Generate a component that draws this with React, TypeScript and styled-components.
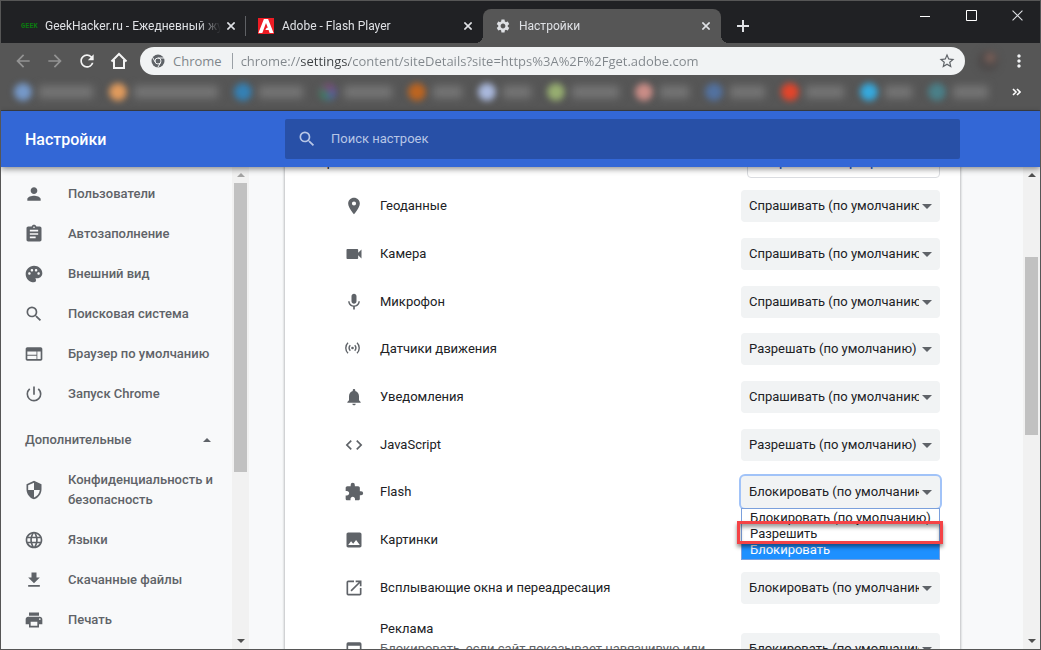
import React from 'react';
import styled, { createGlobalStyle, css } from 'styled-components';
import {
  MdPerson, MdAssignment, MdPalette, MdSearch, MdWeb, MdPowerSettingsNew, MdSecurity, MdLanguage,
  MdFileDownload, MdPrint, MdLocationOn, MdVideocam, MdMic, MdNotifications, MdCode, MdExtension,
  MdImage, MdOpenInNew, MdSettings, MdArrowBack, MdArrowForward, MdRefresh, MdStarBorder, MdMoreVert,
  MdWebAsset,
} from 'react-icons/md';

const chromeFont = "'Open Sans', 'Noto Sans', sans-serif";
const pageFont = "Roboto, 'Noto Sans', sans-serif";

const GlobalStyle = createGlobalStyle`
  * { box-sizing: border-box; }
  body { margin: 0; background: #565656; }
  button, input, select { font: inherit; color: inherit; }
`;

const Window = styled.div`
  display: flex;
  flex-direction: column;
  height: 100vh;
  border: 1px solid #565656;
  overflow: hidden;
  font: 13px/20px ${pageFont};
`;

/* ---------- title bar ---------- */

const TitleBar = styled.div`
  display: flex;
  flex: none;
  height: 42px;
  padding-left: 8px;
  background: #202124;
  color: #dfe1e5;
  font: 12px/18px ${pageFont};
`;

const TabStrip = styled.div`
  display: flex;
  flex: 1;
  min-width: 0;
  padding-top: 8px;
`;

const TabBox = styled.div<{ $active?: boolean; $line?: boolean }>`
  position: relative;
  display: flex;
  align-items: center;
  gap: 8px;
  flex: 0 1 ${p => (p.$active ? 238 : 237)}px;
  min-width: 0;
  padding: 0 7px 0 12px;
  ${p => p.$line && css`
    &::after {
      content: '';
      position: absolute;
      right: 0;
      top: 7px;
      width: 1px;
      height: 20px;
      background: #5f6165;
    }
  `}
  ${p => p.$active && css`
    background: #565656;
    border-radius: 8px 8px 0 0;
    &::before, &::after {
      content: '';
      position: absolute;
      bottom: 0;
      width: 8px;
      height: 8px;
    }
    &::before {
      left: -8px;
      background: radial-gradient(circle at 0 0, transparent 8px, #565656 8px);
    }
    &::after {
      right: -8px;
      background: radial-gradient(circle at 100% 0, transparent 8px, #565656 8px);
    }
  `}
`;

const TabTitle = styled.span`
  flex: 1;
  min-width: 0;
  margin-right: -6px;
  overflow: hidden;
  white-space: nowrap;
  mask-image: linear-gradient(to right, #000 calc(100% - 24px), transparent);
`;

const PlainButton = styled.button`
  display: flex;
  align-items: center;
  justify-content: center;
  flex: none;
  padding: 0;
  border: 0;
  background: none;
  color: inherit;
`;

const TabClose = styled(PlainButton)`
  width: 16px;
  height: 16px;
`;

const NewTab = styled(PlainButton)`
  width: 28px;
  height: 34px;
  margin-left: 8px;
`;

const CaptionButton = styled(PlainButton)`
  width: 46px;
  height: 29px;
`;

const GeekIcon = styled.span`
  width: 16px;
  color: #0b7a0f;
  font: bold 7px/16px 'Liberation Mono', monospace;
`;

/* ---------- toolbar ---------- */

const Toolbar = styled.div`
  display: flex;
  align-items: center;
  flex: none;
  height: 35px;
  padding: 0 10px 0 6px;
  background: #565656;
  color: #f1f3f4;
`;

const ToolButton = styled(PlainButton)<{ $dim?: boolean }>`
  width: 32px;
  height: 28px;
  color: ${p => (p.$dim ? '#939393' : '#f4f4f4')};
`;

const Omnibox = styled.div`
  display: flex;
  align-items: center;
  flex: 1;
  min-width: 0;
  height: 28px;
  margin-left: 5px;
  padding: 0 9px 0 11px;
  border-radius: 14px;
  background: #f1f3f4;
  color: #80868b;
  font: 13px/20px ${chromeFont};
`;

const SiteChip = styled.span`
  margin: 0 10px 0 8px;
`;

const ChipLine = styled.span`
  width: 1px;
  height: 16px;
  margin-right: 8px;
  background: #9aa0a6;
`;

const UrlInput = styled.input`
  flex: 1;
  min-width: 0;
  padding: 0;
  border: 0;
  outline: 0;
  background: linear-gradient(to right, #80868b 60px, #3c4043 60px, #3c4043 108px, #80868b 108px);
  background-clip: text;
  -webkit-background-clip: text;
  -webkit-text-fill-color: transparent;
`;

const Avatar = styled.span`
  width: 22px;
  height: 22px;
  margin: 0 9px 0 12px;
  border-radius: 50%;
  background: radial-gradient(circle at 60% 35%, #7c6058 10%, #4e4a4a 40%, #4c4c4c);
  filter: blur(3px);
`;

const MenuButton = styled(PlainButton)`
  width: 22px;
`;

/* ---------- bookmarks ---------- */

const BookmarkBar = styled.div`
  display: flex;
  align-items: center;
  flex: none;
  height: 33px;
  padding: 0 19px 4px 13px;
  border-bottom: 1px solid #3c3f45;
  background: #565656;
  color: #fff;
`;

const Bookmark = styled(PlainButton)<{ $width: number }>`
  flex: 0 1 ${p => p.$width}px;
  justify-content: flex-start;
  gap: 7px;
  padding-right: 16px;
`;

const BookmarkDot = styled.span<{ $color: string }>`
  flex: none;
  width: 18px;
  height: 18px;
  border-radius: 50%;
  background: ${p => p.$color};
  filter: blur(3px);
`;

const BookmarkSmear = styled.span`
  flex: 1;
  height: 12px;
  background: #767676;
  filter: blur(4px);
`;

const More = styled(PlainButton)`
  margin-left: auto;
`;

/* ---------- settings page ---------- */

const Header = styled.header`
  position: relative;
  z-index: 2;
  display: flex;
  align-items: center;
  flex: none;
  height: 56px;
  padding: 0 80px 0 24px;
  background: #3367d6;
  box-shadow: 0 2px 6px rgba(0, 0, 0, 0.45);
  color: #fff;
`;

const PageTitle = styled.h1`
  flex: 0 0 260px;
  margin: 0;
  padding-top: 2px;
  font: 500 16px/24px ${pageFont};
`;

const SearchField = styled.label`
  display: flex;
  align-items: center;
  gap: 14px;
  flex: 1;
  min-width: 0;
  height: 40px;
  padding: 0 12px;
  border-radius: 2px;
  background: #2850a7;
  color: #b7c6e6;
`;

const SearchInput = styled.input`
  flex: 1;
  min-width: 0;
  padding: 0;
  border: 0;
  outline: 0;
  background: none;
  &::placeholder { color: #b7c6e6; opacity: 1; }
`;

const Body = styled.div`
  display: flex;
  flex: 1;
  min-height: 0;
  background: #f8f9fa;
`;

const Sidebar = styled.nav`
  flex: 0 0 231px;
  padding-top: 7px;
  overflow: hidden;
  color: #5f6368;
  font-weight: 500;
`;

const NavLink = styled.a`
  display: flex;
  align-items: center;
  gap: 24px;
  min-height: 40px;
  padding: 0 16px 0 23px;
  color: inherit;
  text-decoration: none;
  svg { flex: none; }
`;

const NavLinkTall = styled(NavLink)`
  min-height: 60px;
`;

const NavGroup = styled(PlainButton)`
  justify-content: space-between;
  width: 100%;
  height: 40px;
  margin-top: 6px;
  padding: 0 21px 0 24px;
  font-weight: 500;
`;

const ScrollTrack = styled.div`
  display: flex;
  flex-direction: column;
  align-items: center;
  flex: 0 0 17px;
  background: #f1f1f1;
`;

const ScrollArrow = styled(PlainButton)<{ $dim?: boolean; $last?: boolean }>`
  width: 17px;
  height: 16px;
  margin-top: ${p => (p.$last ? 'auto' : '0')};
  color: ${p => (p.$dim ? '#a3a3a3' : '#505050')};
`;

const ScrollThumb = styled.div<{ $start: number; $size: number }>`
  flex: 0 0 ${p => p.$size}%;
  width: 13px;
  margin-top: ${p => p.$start}px;
  background: #c1c1c1;
`;

const Main = styled.main`
  flex: 1;
  min-width: 0;
  padding: 0 63px 0 36px;
  overflow: hidden;
`;

const Card = styled.section`
  margin-top: -22px;
  padding: 0 20px;
  background: #fff;
  box-shadow: 0 0 2px 1px rgba(60, 64, 67, 0.3);
  color: #202124;
`;

const CardHead = styled.div`
  display: flex;
  align-items: center;
  justify-content: space-between;
  margin-bottom: 4px;
`;

const CardTitle = styled.h2`
  margin: 0;
  font: inherit;
`;

const ResetButton = styled.button`
  height: 33px;
  padding: 0 15px;
  border: 1px solid #dadce0;
  border-radius: 4px;
  background: #fff;
  color: #3367d6;
  font-weight: 500;
`;

const PermissionRow = styled.div<{ $tall?: boolean }>`
  display: flex;
  align-items: center;
  height: ${p => (p.$tall ? '76px' : '48px')};
  margin-left: 39px;
  &:nth-child(3n) { height: 47px; }
`;

const RowIcon = styled.span`
  display: flex;
  flex: 0 0 36px;
  color: #5f6368;
`;

const RowLabel = styled.label`
  flex: 1;
  min-width: 0;
  padding-right: 24px;
`;

const RowNote = styled.span`
  display: block;
  color: #5f6368;
`;

const SelectBox = styled.div`
  position: relative;
  flex: 0 0 199px;
  color: #5f6368;
  > svg {
    position: absolute;
    right: 8px;
    top: 14px;
    pointer-events: none;
  }
`;

const Select = styled.select<{ $open?: boolean }>`
  display: block;
  width: 100%;
  height: 32px;
  padding: 0 21px 0 8px;
  border: 0;
  border-radius: 4px;
  outline: 0;
  appearance: none;
  background: #f1f3f4;
  color: #202124;
  box-shadow: ${p => (p.$open ? '0 0 0 2px #a1c3f8' : 'none')};
`;

const OptionList = styled.ul`
  position: absolute;
  z-index: 1;
  left: 0;
  right: 0;
  top: 32px;
  margin: 0;
  padding: 0;
  border: 1px solid #7ba0dc;
  background: #fff;
  list-style: none;
  line-height: 18px;
`;

const Option = styled.li<{ $on?: boolean }>`
  height: ${p => (p.$on ? '18px' : '16px')};
  padding-left: 8px;
  white-space: nowrap;
  background: ${p => (p.$on ? '#1e90ff' : 'transparent')};
  color: ${p => (p.$on ? '#fff' : '#202124')};
`;

const Highlight = styled.div`
  position: absolute;
  z-index: 2;
  left: -4px;
  right: -3px;
  top: 45px;
  height: 23px;
  border: 3px solid #f44346;
  box-shadow: 0 3px 4px rgba(0, 0, 0, 0.45), inset 0 3px 4px rgba(0, 0, 0, 0.4);
  pointer-events: none;
`;

/* ---------- drawings ---------- */

const Cross = ({ size = 8, width = 2 }: { size?: number; width?: number }) => (
  <svg width={size} height={size} viewBox="0 0 10 10" stroke="currentColor" strokeWidth={width} aria-hidden>
    <path d="M0.5 0.5l9 9M9.5 0.5l-9 9" />
  </svg>
);

const Triangle = ({ up, size = 10 }: { up?: boolean; size?: number }) => (
  <svg width={size} height={size / 2} viewBox="0 0 10 5" fill="currentColor" aria-hidden>
    <path d={up ? 'M0 5L5 0l5 5z' : 'M0 0l5 5 5-5z'} />
  </svg>
);

const AdobeIcon = () => (
  <svg width="16" height="16" viewBox="0 0 16 16" aria-hidden>
    <path fill="#ed1c24" d="M0 0h16v16H0z" />
    <path fill="#fff" d="M5.900 1h4.200L15.600 15h-4L10.600 12H7.300l1.400-2.300h1.100L8 5 4.300 15H.4z" />
  </svg>
);

const ChromeIcon = () => (
  <svg width="14" height="14" viewBox="0 0 14 14" aria-hidden>
    <circle cx="7" cy="7" r="6.500" fill="#5f6368" />
    <circle cx="7" cy="7" r="3" fill="#5f6368" stroke="#f1f3f4" strokeWidth="1" />
    <path d="M7 4h6M4.400 8.500L1.600 3.400M9.600 8.500L6.800 13.400" stroke="#f1f3f4" strokeWidth="1" />
  </svg>
);

const HomeIcon = () => (
  <svg width="18" height="18" viewBox="0 0 18 18" fill="none" stroke="currentColor" strokeWidth="2" aria-hidden>
    <path d="M1.500 9.500L9 2l7.500 7.500M4 8v8h10V8" />
  </svg>
);

const SensorIcon = () => (
  <svg width="20" height="20" viewBox="0 0 20 20" fill="none" stroke="#5f6368" strokeWidth="1.400" aria-hidden>
    <circle cx="8.500" cy="9" r="1.300" fill="#5f6368" stroke="none" />
    <path d="M6.300 6.300a4 4 0 0 0 0 5.400M10.700 6.300a4 4 0 0 1 0 5.400M4 3.800a7.200 7.200 0 0 0 0 10.400M13 3.800a7.200 7.200 0 0 1 0 10.400" />
  </svg>
);

/* ---------- data ---------- */

const bookmarks: [string, number][] = [
  ['#7598c8', 95], ['#e09a5c', 125], ['#3480b4', 85],
  ['conic-gradient(#7a4a70, #55609a, #3c8060, #7a4a70)', 89], ['#bc6420', 70], ['#a9b8dc', 69],
  ['#96ad70', 88], ['#c98c86', 70], ['#52719f', 76], ['#e2442a', 79], ['#35a8dc', 68], ['#4a7f88', 76],
];

const navTop = [
  { icon: MdPerson, text: 'Пользователи' },
  { icon: MdAssignment, text: 'Автозаполнение' },
  { icon: MdPalette, text: 'Внешний вид' },
  { icon: MdSearch, text: 'Поисковая система' },
  { icon: MdWeb, text: 'Браузер по умолчанию' },
  { icon: MdPowerSettingsNew, text: 'Запуск Chrome' },
];

const navMore = [
  { icon: MdLanguage, text: 'Языки' },
  { icon: MdFileDownload, text: 'Скачанные файлы' },
  { icon: MdPrint, text: 'Печать' },
];

const ask = 'Спрашивать (по умолчанию)';
const allow = 'Разрешать (по умолчанию)';
const block = 'Блокировать (по умолчанию)';

const permissions = [
  { id: 'geo', icon: <MdLocationOn size={20} />, text: 'Геоданные', value: ask },
  { id: 'camera', icon: <MdVideocam size={20} />, text: 'Камера', value: ask },
  { id: 'mic', icon: <MdMic size={20} />, text: 'Микрофон', value: ask },
  { id: 'sensors', icon: <SensorIcon />, text: 'Датчики движения', value: allow },
  { id: 'notify', icon: <MdNotifications size={20} />, text: 'Уведомления', value: ask },
  { id: 'js', icon: <MdCode size={20} />, text: 'JavaScript', value: allow },
  { id: 'flash', icon: <MdExtension size={20} />, text: 'Flash', value: block, open: true },
  { id: 'images', icon: <MdImage size={20} />, text: 'Картинки', value: block },
  { id: 'popups', icon: <MdOpenInNew size={20} />, text: 'Всплывающие окна и переадресация', value: block },
  {
    id: 'ads', icon: <MdWebAsset size={20} />, text: 'Реклама', value: block,
    note: 'Блокировать, если сайт показывает навязчивую или вводящую в заблуждение рекламу',
  },
];

export default function App() {
  return (
    <Window>
      <GlobalStyle />
      <TitleBar>
        <TabStrip>
          <TabBox $line>
            <GeekIcon>GEEK</GeekIcon>
            <TabTitle>GeekHacker.ru - Ежедневный жу</TabTitle>
            <TabClose aria-label="Закрыть вкладку"><Cross /></TabClose>
          </TabBox>
          <TabBox>
            <AdobeIcon />
            <TabTitle>Adobe - Flash Player</TabTitle>
            <TabClose aria-label="Закрыть вкладку"><Cross /></TabClose>
          </TabBox>
          <TabBox $active>
            <MdSettings size={16} />
            <TabTitle>Настройки</TabTitle>
            <TabClose aria-label="Закрыть вкладку"><Cross /></TabClose>
          </TabBox>
          <NewTab aria-label="Новая вкладка">
            <svg width="12" height="12" viewBox="0 0 12 12" stroke="currentColor" strokeWidth="2" aria-hidden>
              <path d="M6 0v12M0 6h12" />
            </svg>
          </NewTab>
        </TabStrip>
        <CaptionButton aria-label="Свернуть">
          <svg width="10" height="10" viewBox="0 0 10 10" stroke="#fff" aria-hidden><path d="M0 5.500h10" /></svg>
        </CaptionButton>
        <CaptionButton aria-label="Развернуть">
          <svg width="11" height="11" viewBox="0 0 11 11" fill="none" stroke="#fff" aria-hidden>
            <path d="M.5.5h10v10H.5z" />
          </svg>
        </CaptionButton>
        <CaptionButton aria-label="Закрыть"><Cross size={11} width={1} /></CaptionButton>
      </TitleBar>

      <Toolbar>
        <ToolButton $dim aria-label="Назад"><MdArrowBack size={20} /></ToolButton>
        <ToolButton $dim aria-label="Вперёд"><MdArrowForward size={20} /></ToolButton>
        <ToolButton aria-label="Обновить"><MdRefresh size={20} /></ToolButton>
        <ToolButton aria-label="Домой"><HomeIcon /></ToolButton>
        <Omnibox>
          <ChromeIcon />
          <SiteChip>Chrome</SiteChip>
          <ChipLine />
          <UrlInput
            aria-label="Адрес"
            defaultValue="chrome://settings/content/siteDetails?site=https%3A%2F%2Fget.adobe.com"
          />
          <MdStarBorder size={18} color="#5f6368" />
        </Omnibox>
        <Avatar />
        <MenuButton aria-label="Меню"><MdMoreVert size={20} /></MenuButton>
      </Toolbar>

      <BookmarkBar>
        {bookmarks.map(([color, width], i) => (
          <Bookmark key={i} $width={width} aria-label="Закладка">
            <BookmarkDot $color={color} />
            <BookmarkSmear />
          </Bookmark>
        ))}
        <More aria-label="Другие закладки">
          <svg width="9" height="8" viewBox="0 0 9 8" fill="none" stroke="#fff" strokeWidth="1.600" aria-hidden>
            <path d="M1 1l3 3-3 3M5 1l3 3-3 3" />
          </svg>
        </More>
      </BookmarkBar>

      <Header>
        <PageTitle>Настройки</PageTitle>
        <SearchField>
          <MdSearch size={20} />
          <SearchInput type="search" placeholder="Поиск настроек" aria-label="Поиск настроек" />
        </SearchField>
      </Header>

      <Body>
        <Sidebar>
          {navTop.map(({ icon: Icon, text }) => (
            <NavLink key={text} href="#"><Icon size={20} />{text}</NavLink>
          ))}
          <NavGroup>Дополнительные<Triangle up size={8} /></NavGroup>
          <NavLinkTall href="#"><MdSecurity size={20} />Конфиденциальность и безопасность</NavLinkTall>
          {navMore.map(({ icon: Icon, text }) => (
            <NavLink key={text} href="#"><Icon size={20} />{text}</NavLink>
          ))}
        </Sidebar>
        <ScrollTrack>
          <ScrollArrow $dim aria-label="Вверх"><Triangle up size={8} /></ScrollArrow>
          <ScrollThumb $start={0} $size={60} />
          <ScrollArrow $last aria-label="Вниз"><Triangle size={8} /></ScrollArrow>
        </ScrollTrack>

        <Main>
          <Card>
            <CardHead>
              <CardTitle>Разрешения</CardTitle>
              <ResetButton>Сбросить все разрешения</ResetButton>
            </CardHead>
            <div>
              {permissions.map(({ id, icon, text, value, open, note }) => (
                <PermissionRow key={id} $tall={!!note}>
                  <RowIcon>{icon}</RowIcon>
                  <RowLabel htmlFor={id}>
                    {text}
                    {note && <RowNote>{note}</RowNote>}
                  </RowLabel>
                  <SelectBox>
                    <Select id={id} $open={open} defaultValue={value}>
                      <option>{value}</option>
                    </Select>
                    <Triangle />
                    {open && (
                      <>
                        <OptionList role="listbox" aria-label={text}>
                          <Option role="option">Блокировать (по умолчанию)</Option>
                          <Option role="option">Разрешить</Option>
                          <Option role="option" $on aria-selected>Блокировать</Option>
                        </OptionList>
                        <Highlight />
                      </>
                    )}
                  </SelectBox>
                </PermissionRow>
              ))}
            </div>
          </Card>
        </Main>
        <ScrollTrack>
          <ScrollArrow aria-label="Вверх"><Triangle up size={8} /></ScrollArrow>
          <ScrollThumb $start={74} $size={37} />
          <ScrollArrow $last aria-label="Вниз"><Triangle size={8} /></ScrollArrow>
        </ScrollTrack>
      </Body>
    </Window>
  );
}
